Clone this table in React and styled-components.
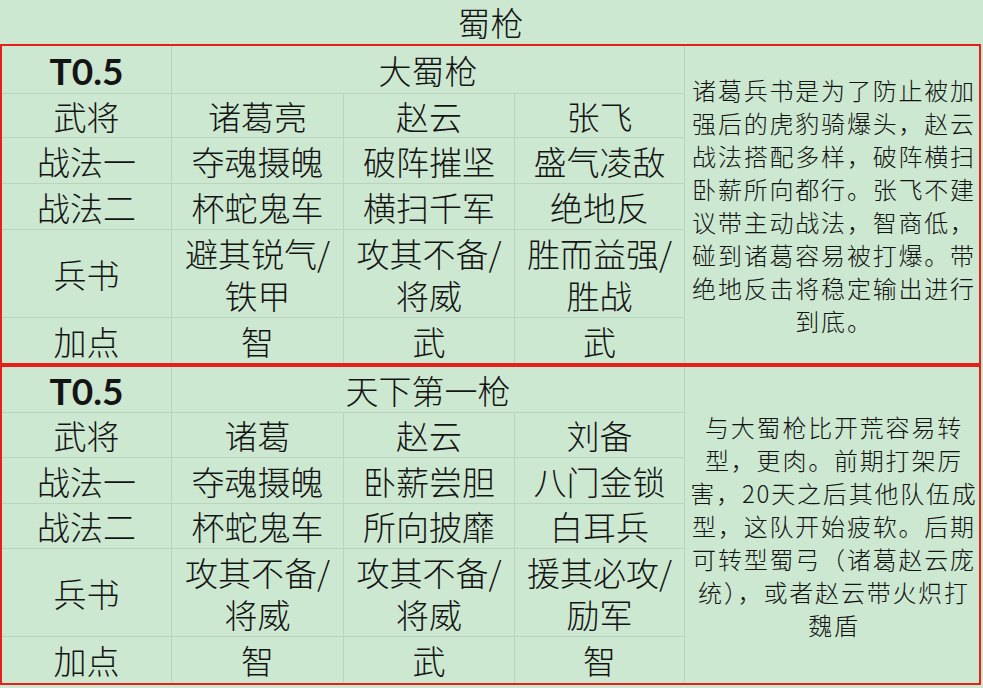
import React from 'react';
import styled, { createGlobalStyle } from 'styled-components';

const GlobalStyle = createGlobalStyle`
  html, body {
    margin: 0;
    padding: 0;
    background: #cde8d0;
  }
  body {
    font-family: "Noto Sans CJK SC", "Noto Sans", sans-serif;
    color: #141414;
  }
`;

const blocks = [
  {
    name: '大蜀枪',
    generals: ['诸葛亮', '赵云', '张飞'],
    skill1: ['夺魂摄魄', '破阵摧坚', '盛气凌敌'],
    skill2: ['杯蛇鬼车', '横扫千军', '绝地反'],
    books: [['避其锐气/', '铁甲'], ['攻其不备/', '将威'], ['胜而益强/', '胜战']],
    points: ['智', '武', '武'],
    note: [
      '诸葛兵书是为了防止被加',
      '强后的虎豹骑爆头，赵云',
      '战法搭配多样，破阵横扫',
      '卧薪所向都行。张飞不建',
      '议带主动战法，智商低，',
      '碰到诸葛容易被打爆。带',
      '绝地反击将稳定输出进行',
      '到底。',
    ],
  },
  {
    name: '天下第一枪',
    generals: ['诸葛', '赵云', '刘备'],
    skill1: ['夺魂摄魄', '卧薪尝胆', '八门金锁'],
    skill2: ['杯蛇鬼车', '所向披靡', '白耳兵'],
    books: [['攻其不备/', '将威'], ['攻其不备/', '将威'], ['援其必攻/', '励军']],
    points: ['智', '武', '智'],
    note: [
      '与大蜀枪比开荒容易转',
      '型，更肉。前期打架厉',
      '害，20天之后其他队伍成',
      '型，这队开始疲软。后期',
      '可转型蜀弓（诸葛赵云庞',
      '统），或者赵云带火炽打',
      '魏盾',
    ],
  },
];

const Page = styled.div`
  width: 983px;
  height: 688px;
  overflow: hidden;
`;

const Title = styled.div`
  height: 44px;
  display: flex;
  align-items: center;
  justify-content: center;
  font-size: 33px;
  font-weight: 300;
  line-height: 44px;
  padding-right: 2px;
`;

const Block = styled.div`
  width: 981px;
  box-sizing: border-box;
  border: 2px solid #e3201c;
  display: grid;
  grid-template-columns: 170px 172px 171px 170px 1fr;
  grid-template-rows: ${(p) => p.$rows};
`;

const Cell = styled.div`
  display: flex;
  flex-direction: column;
  align-items: center;
  justify-content: center;
  font-size: 33px;
  font-weight: 300;
  line-height: 42px;
  white-space: nowrap;
  border-right: 1px solid #b9d4bd;
  border-bottom: ${(p) => (p.$last ? 'none' : '1px solid #b9d4bd')};
  grid-column: ${(p) => p.$span || 'auto'};
`;

const Line = styled.span`
  display: block;
  height: ${(p) => p.$h || '42px'};
`;

const Tier = styled(Cell)`
  font-family: Lato, "Liberation Sans", sans-serif;
  font-weight: 700;
  font-size: 37px;
  padding-top: 2px;
`;

const Note = styled.div`
  grid-column: 5;
  grid-row: 1 / -1;
  display: flex;
  flex-direction: column;
  align-items: center;
  justify-content: center;
  font-size: 24px;
  font-weight: 300;
  line-height: 33px;
  letter-spacing: 1.8px;
  padding-left: 4px;
  white-space: nowrap;
`;

function Row({ label, values, last }) {
  return (
    <>
      <Cell $last={last}>{label}</Cell>
      {values.map((v, i) => (
        <Cell key={i} $last={last}>
          {Array.isArray(v) ? v.map((line) => <Line key={line}>{line}</Line>) : v}
        </Cell>
      ))}
    </>
  );
}

function TeamBlock({ data, rows }) {
  return (
    <Block $rows={rows}>
      <Tier>T0.5</Tier>
      <Cell $span="2 / 5">{data.name}</Cell>
      <Row label="武将" values={data.generals} />
      <Row label="战法一" values={data.skill1} />
      <Row label="战法二" values={data.skill2} />
      <Row label="兵书" values={data.books} />
      <Row label="加点" values={data.points} last />
      <Note>
        {data.note.map((line) => (
          <Line key={line} $h="33px">{line}</Line>
        ))}
      </Note>
    </Block>
  );
}

export default function App() {
  return (
    <Page>
      <GlobalStyle />
      <Title>蜀枪</Title>
      <TeamBlock data={blocks[0]} rows="48px 44px 46px 46px 88px 45px" />
      <TeamBlock data={blocks[1]} rows="46px 45px 46px 45px 88px 46px" />
    </Page>
  );
}
